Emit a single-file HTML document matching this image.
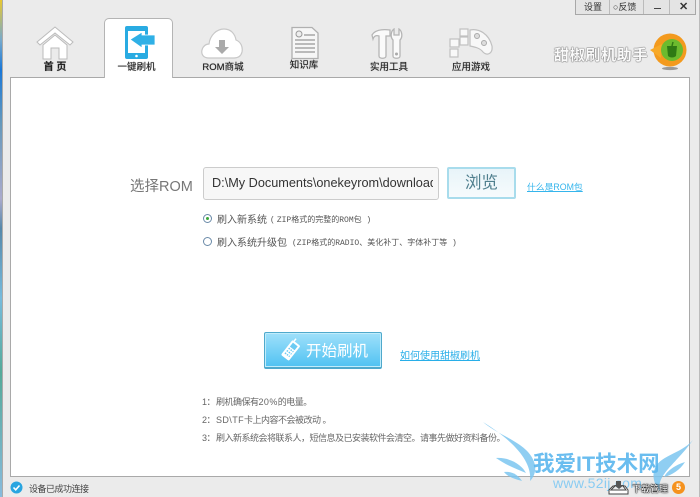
<!DOCTYPE html>
<html><head><meta charset="utf-8">
<style>
*{margin:0;padding:0;box-sizing:border-box}
html,body{width:700px;height:497px;overflow:hidden;background:#ebebeb}
body{position:relative;font-family:"Liberation Sans","Noto Sans CJK SC",sans-serif;color:#555}
.a{position:absolute;white-space:nowrap}
.tab{font-size:9.500px;color:#222;text-align:center;line-height:12px;text-shadow:0 0 .6px #444}
.note{font-size:9px;color:#666;letter-spacing:-.5px}
.note b{font-weight:normal;letter-spacing:.4px}
.m{font-size:8px;font-family:'Liberation Mono','Noto Sans CJK SC',monospace;color:#555}
</style></head><body>
<div class="a" style="left:0;top:0;width:2px;height:497px;background:linear-gradient(#e8c830 0,#7ac 8%,#1a78d8 14%,#69b 25%,#aac 40%,#58a 46%,#7bd 60%,#5a9 75%,#8bd 100%)"></div>
<div class="a" style="left:2px;top:0;width:1px;height:497px;background:#aaa"></div>
<div class="a" style="left:699px;top:0;width:1px;height:497px;background:#bbb"></div>

<!-- content -->
<div class="a" style="left:10px;top:77px;width:680px;height:400px;background:#fff;border:1px solid #a9a9a9"></div>
<!-- active tab -->
<div class="a" style="left:104px;top:18px;width:69px;height:60px;background:#fff;border:1px solid #b4b4b4;border-bottom:0;border-radius:5px 5px 0 0"></div>

<!-- top buttons -->
<div class="a" style="left:575px;top:0;width:121px;height:15px;background:#e4e4e4;border:1px solid #a8a8a8;border-top:0;font-size:9px;color:#333;line-height:14px">
<span class="a" style="left:8px;top:0">设置</span><span class="a" style="left:37px;top:0">○反馈</span>
<span class="a" style="left:33px;top:0;width:1px;height:14px;background:#bbb"></span>
<span class="a" style="left:67px;top:0;width:1px;height:14px;background:#bbb"></span>
<span class="a" style="left:93px;top:0;width:1px;height:14px;background:#bbb"></span>
<span class="a" style="left:78px;top:8px;width:7px;height:1px;background:#444"></span>
<span class="a" style="left:103px;top:0;font-size:11px;font-weight:bold">✕</span>
</div>

<!-- home icon -->
<svg class="a" style="left:34px;top:25px" width="42" height="36" viewBox="0 0 42 36"><path d="M3 17 21 2 39 17 36 20 21 8 6 20Z" fill="#fff" stroke="#bbb"/><path d="M9 20 21 10 33 20V34H25V23H17V34H9Z" fill="#fff" stroke="#bbb"/></svg>
<div class="a tab" style="left:34px;top:62px;width:42px;font-size:10px;font-weight:bold">首 页</div>

<!-- flash icon -->
<svg class="a" style="left:124px;top:25px" width="32" height="35" viewBox="0 0 32 35"><rect x="1" y="1" width="23" height="33" rx="2" fill="#29abe2"/><rect x="4" y="6" width="17" height="22" fill="#fff"/><circle cx="12.500" cy="31" r="1.300" fill="#fff"/><path d="M6 14.500 18 7V10H31V20H18V23Z" fill="#2fb0e6" stroke="#fff" stroke-width=".8"/></svg>
<div class="a tab" style="left:102px;top:62px;width:69px">一键刷机</div>

<!-- cloud icon -->
<svg class="a" style="left:201px;top:28px" width="42" height="32" viewBox="0 0 42 32"><path d="M8 30C2 30 0 26 1 22 2 18 5 16 8 16 9 7 16 1 23 1 30 1 34 6 35 12 40 14 42 19 41 24 40 28 37 30 33 30Z" fill="#fff" stroke="#c8c8c8" stroke-width="1.200"/><path d="M18 12H24V19H28L21 26 14 19H18Z" fill="#aaa"/></svg>
<div class="a tab" style="left:198px;top:62px;width:50px">ROM商城</div>

<!-- doc icon -->
<svg class="a" style="left:290px;top:26px" width="30" height="34" viewBox="0 0 30 34"><path d="M2 1.500H22L28 7V32.500H2Z" fill="#f6f6f6" stroke="#b0b0b0" stroke-width="1.300"/><circle cx="9" cy="8" r="3" fill="#eee" stroke="#999"/><path d="M14 9H25M5 14H25M5 18H25M5 22H25M5 26H25" stroke="#a5a5a5" stroke-width="1.500"/></svg>
<div class="a tab" style="left:284px;top:60px;width:40px">知识库</div>

<!-- tools icon -->
<svg class="a" style="left:371px;top:28px" width="32" height="32" viewBox="0 0 32 32"><path d="M1 7C4 2 11 1 19 2V8H15V28C15 31 8 31 8 28V8C5 7 3 8 2 11Z" fill="#fafafa" stroke="#b5b5b5" stroke-width="1.300"/><path d="M23 1V7H28V1C31 3 32 9 29 12V28C29 31 22 31 22 28V12C19 9 20 3 23 1Z" fill="#fafafa" stroke="#b5b5b5" stroke-width="1.300"/><circle cx="25.500" cy="26" r="1.500" fill="#aaa"/></svg>
<div class="a tab" style="left:365px;top:62px;width:48px">实用工具</div>

<!-- game icon -->
<svg class="a" style="left:449px;top:28px" width="46" height="30" viewBox="0 0 46 30"><g fill="#f8f8f8" stroke="#c0c0c0" stroke-width="1.200"><rect x="1" y="11" width="9" height="8"/><rect x="1" y="21" width="8" height="8"/><rect x="11" y="9" width="8" height="8"/><rect x="11" y="1" width="8" height="7"/><path d="M21 2C30 0 40 6 43 18 44 26 38 28 34 24 31 20 26 19 21 18Z"/></g><circle cx="28" cy="8" r="2.500" fill="#ddd" stroke="#aaa"/><circle cx="35" cy="15" r="2.500" fill="#ddd" stroke="#aaa"/></svg>
<div class="a tab" style="left:447px;top:62px;width:48px">应用游戏</div>

<!-- logo -->
<div class="a" style="left:554px;top:44px;font-size:15px;font-weight:bold;color:#fafafa;letter-spacing:.7px;text-shadow:0 0 1px #666,0 0 1px #666,0 0 1px #777">甜椒刷机助手</div>
<svg class="a" style="left:648px;top:32px" width="40" height="40" viewBox="0 0 40 40"><ellipse cx="22" cy="36.500" rx="8" ry="1.600" fill="#999"/><circle cx="22" cy="18" r="16.500" fill="#f39a1e"/><path d="M2 18 14 12 13 26Z" fill="#f7a928"/><circle cx="24" cy="18" r="11" fill="#6cbb2e"/><path d="M19 14H29L28 24C26 26 22 26 20 24Z" fill="#2f7a14"/><path d="M24 14 25 10" stroke="#2f7a14" stroke-width="1.500"/></svg>

<!-- ROM row -->
<div class="a" style="left:130px;top:175px;font-size:14.500px;color:#777">选择ROM</div>
<div class="a" style="left:203px;top:167px;width:236px;height:33px;background:#f7f7f7;border:1px solid #ccc;border-radius:3px;font-size:12.700px;color:#333;line-height:31px;padding-left:8px;overflow:hidden"><span style="display:block;width:221px;overflow:hidden">D:\My Documents\onekeyrom\download</span></div>
<div class="a" style="left:447px;top:167px;width:69px;height:32px;background:linear-gradient(#e8f4f9,#f6fbfd);border:2px solid #a8dcec;border-radius:2px;font-size:16.500px;color:#4f7f8e;text-align:center;line-height:28px">浏览</div>
<div class="a" style="left:527px;top:180px;font-size:8.800px;color:#35b5ec;text-decoration:underline">什么是ROM包</div>

<!-- radios -->
<div class="a" style="left:203px;top:214px;width:9px;height:9px;border:1px solid #6a8aa8;border-radius:50%;background:#fff"></div>
<div class="a" style="left:206px;top:217px;width:3px;height:3px;border-radius:50%;background:#3aa83a"></div>
<div class="a" style="left:217px;top:211px;font-size:10px;color:#555">刷入新系统</div>
<div class="a m" style="left:270px;top:214px">(<span style="margin-left:2px">ZIP格式的完整的ROM包</span> )</div>
<div class="a" style="left:203px;top:237px;width:9px;height:9px;border:1px solid #6a8aa8;border-radius:50%;background:#fff"></div>
<div class="a" style="left:217px;top:234px;font-size:10px;color:#555">刷入系统升级包</div>
<div class="a m" style="left:292px;top:237px">(ZIP格式的RADIO、美化补丁、字体补丁等 )</div>

<!-- start button -->
<div class="a" style="left:264px;top:332px;width:118px;height:37px;background:linear-gradient(#9fe0fa,#50c2f2);border:1px solid #4fa9cc;border-bottom:2px solid #4fa9cc;border-radius:2px;box-shadow:inset 0 0 0 1px #c0ecfb"></div>
<svg class="a" style="left:280px;top:338px" width="22" height="24" viewBox="0 0 22 24"><g transform="rotate(38 11 12)"><rect x="6" y="3" width="10" height="19" rx="1.500" fill="#fff"/><rect x="8" y="5" width="6" height="5" fill="#6ccbf3"/><path d="M8 12H14M8 15H14M8 18H14" stroke="#6ccbf3" stroke-width="1.500" stroke-dasharray="1.500 1"/><path d="M8 3V0" stroke="#fff" stroke-width="1.500"/></g></svg>
<div class="a" style="left:306px;top:339px;font-size:15.500px;color:#fff">开始刷机</div>
<div class="a" style="left:400px;top:347px;font-size:10px;color:#28aee8;text-decoration:underline">如何使用甜椒刷机</div>

<!-- notes -->
<div class="a note" style="left:202px;top:395px">1：</div><div class="a note" style="left:216px;top:395px">刷机确保有<b>20%</b>的电量。</div>
<div class="a note" style="left:202px;top:413px">2：</div><div class="a note" style="left:216px;top:413px"><b>SD\TF</b>卡上内容不会被改动 。</div>
<div class="a note" style="left:202px;top:431px">3：</div><div class="a note" style="left:216px;top:431px">刷入新系统会将联系人，短信息及已安装软件会清空。请事先做好资料备份。</div>

<!-- status -->
<svg class="a" style="left:10px;top:481px" width="13" height="13" viewBox="0 0 13 13"><circle cx="6.500" cy="6.500" r="6" fill="#2aa5e0"/><path d="M3.500 6.500 5.700 8.800 9.500 4.500" fill="none" stroke="#fff" stroke-width="1.600"/></svg>
<div class="a" style="left:29px;top:482px;font-size:9px;letter-spacing:-.5px;color:#444">设备已成功连接</div>

<!-- watermark -->
<svg class="a" style="left:480px;top:415px" width="220" height="82" viewBox="0 0 220 82"><g fill="#7cc6f0" opacity=".85"><path d="M3 7C20 22 50 28 55 50 56 56 54 62 50 66 52 50 40 30 3 7Z"/><path d="M16 43C30 42 42 50 46 58 36 54 26 50 16 43Z"/><path d="M24 57C32 56 38 60 42 66 34 64 28 62 24 57Z"/><path d="M213 25C200 40 178 40 174 56 172 64 176 72 180 76 176 60 195 50 213 25Z"/><path d="M205 47C195 50 187 56 184 62 192 60 200 55 205 47Z"/></g></svg>
<div class="a" style="left:533px;top:452px;font-size:21.500px;font-weight:bold;color:#5ab6ee;opacity:.9;line-height:24px">我爱IT技术网</div>
<div class="a" style="left:553px;top:476px;font-size:14px;color:#8accf2;line-height:14px;letter-spacing:.3px">www.52ij.com</div>

<!-- download -->
<svg class="a" style="left:608px;top:480px" width="24" height="15" viewBox="0 0 24 15"><path d="M8 1H13V5H16L11 9 6 5H8Z" fill="#555"/><path d="M1 14V10L5 6H7L3 10H18L15 6H17L20 10V14Z" fill="#fff" stroke="#444"/></svg>
<div class="a" style="left:632px;top:482px;font-size:9px;color:#fff;text-shadow:0 0 1px #111,0 0 1px #111,0 0 1px #111,0 0 2px #222">下载管理</div>
<div class="a" style="left:672px;top:481px;width:13px;height:13px;border-radius:50%;background:#f5921e;color:#fff;font-size:9px;font-weight:bold;text-align:center;line-height:13px">5</div>
</body></html>
